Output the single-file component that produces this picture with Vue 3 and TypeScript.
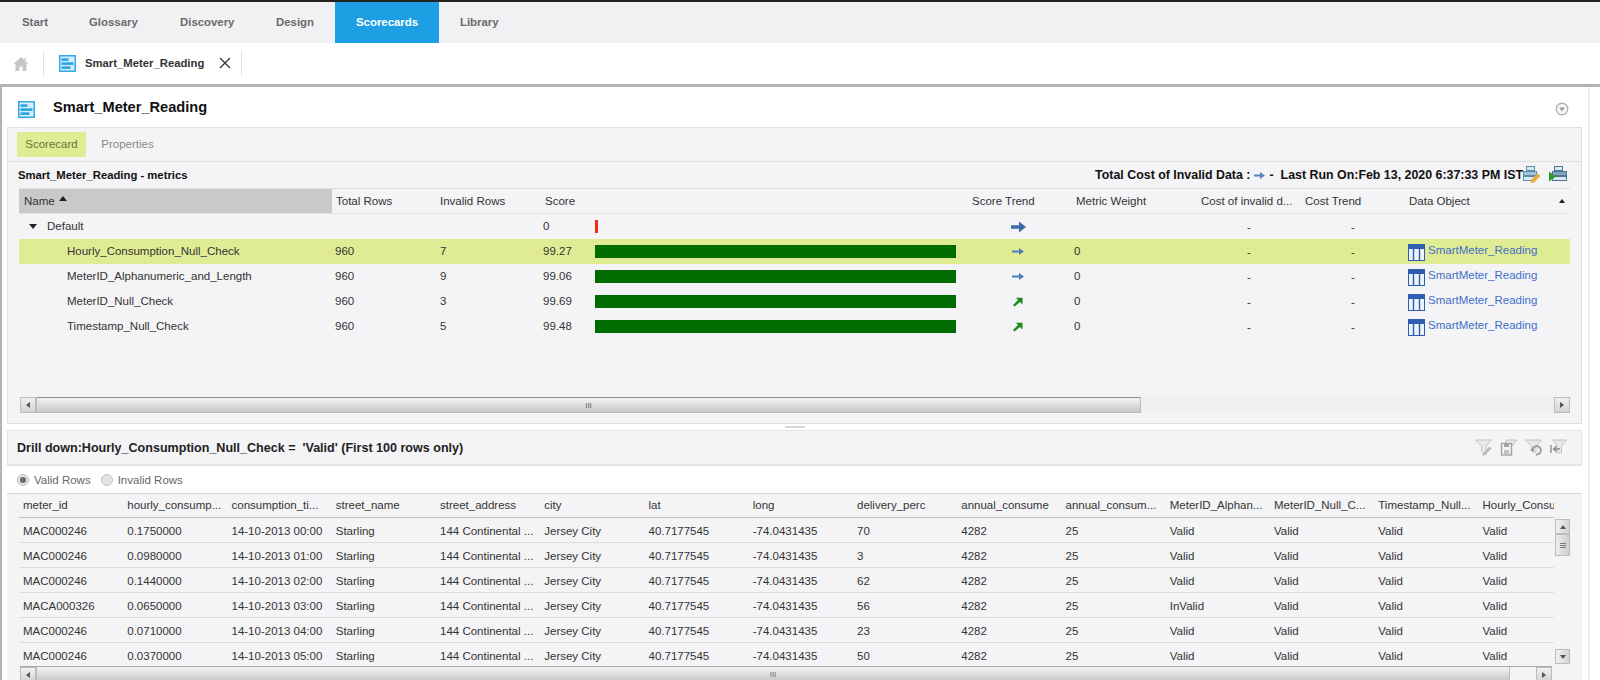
<script setup lang="ts">
interface Metric { name: string; invalid: number; score: string; trend: 'flat' | 'up'; active?: boolean }
const metrics: Metric[] = [
  { name: 'Hourly_Consumption_Null_Check', invalid: 7, score: '99.27', trend: 'flat', active: true },
  { name: 'MeterID_Alphanumeric_and_Length', invalid: 9, score: '99.06', trend: 'flat' },
  { name: 'MeterID_Null_Check', invalid: 3, score: '99.69', trend: 'up' },
  { name: 'Timestamp_Null_Check', invalid: 5, score: '99.48', trend: 'up' },
]
const navTabs = ['Start', 'Glossary', 'Discovery', 'Design', 'Scorecards', 'Library']
const heads = ['meter_id', 'hourly_consump...', 'consumption_ti...', 'street_name', 'street_address', 'city', 'lat', 'long', 'delivery_perc', 'annual_consume', 'annual_consum...', 'MeterID_Alphan...', 'MeterID_Null_C...', 'Timestamp_Null...', 'Hourly_Consu']
const rows: [string, string, string, string, string][] = [
  ['MAC000246', '0.1750000', '00:00', '70', 'Valid'],
  ['MAC000246', '0.0980000', '01:00', '3', 'Valid'],
  ['MAC000246', '0.1440000', '02:00', '62', 'Valid'],
  ['MACA000326', '0.0650000', '03:00', '56', 'InValid'],
  ['MAC000246', '0.0710000', '04:00', '23', 'Valid'],
  ['MAC000246', '0.0370000', '05:00', '50', 'Valid'],
]
</script>

<template>
  <div class="page">
    <nav class="nav">
      <a v-for="t in navTabs" :key="t" class="nav-tab" :class="['t-' + t.toLowerCase(), { on: t === 'Scorecards' }]">{{ t }}</a>
    </nav>
    <div class="tabbar">
      <svg class="home" width="16" height="16" viewBox="0 0 16 16"><path d="M8 1 L15.5 8 H13.5 V15 H9.6 V10.5 H6.4 V15 H2.5 V8 H.5 Z M11.5 2 H13 V5 L11.5 4 Z" fill="#c6c6c6" /></svg>
      <span class="vsep sep1"></span>
      <svg class="sc-icon" width="17" height="17" viewBox="0 0 17 17"><rect width="17" height="17" fill="#35a9e8" /><rect x="1.5" y="1.5" width="14" height="14" fill="#d6edfb" /><rect x="2.5" y="3.3" width="7" height="2.6" fill="#2aa4e6" /><rect x="2.5" y="7.3" width="12" height="2.6" fill="#2aa4e6" /><rect x="2.5" y="11.3" width="9" height="2.6" fill="#2aa4e6" /></svg>
      <span class="doc-name">Smart_Meter_Reading</span>
      <svg class="close" width="12" height="12" viewBox="0 0 12 12"><path d="M1 1 L11 11 M11 1 L1 11" stroke="#333" stroke-width="1.3" /></svg>
      <span class="vsep sep2"></span>
    </div>

    <main class="main">
      <header class="title-row">
        <svg class="sc-icon" width="17" height="17" viewBox="0 0 17 17"><rect width="17" height="17" fill="#35a9e8" /><rect x="1.5" y="1.5" width="14" height="14" fill="#d6edfb" /><rect x="2.5" y="3.3" width="7" height="2.6" fill="#2aa4e6" /><rect x="2.5" y="7.3" width="12" height="2.6" fill="#2aa4e6" /><rect x="2.5" y="11.3" width="9" height="2.6" fill="#2aa4e6" /></svg>
        <h1>Smart_Meter_Reading</h1>
        <svg class="collapse" width="14" height="14" viewBox="0 0 14 14"><circle cx="7" cy="7" r="5.8" fill="#f5f5f5" stroke="#a9a9a9" stroke-width="1.2" /><path d="M4.2 5.4 H9.8 L7 9.2 Z" fill="#999" /></svg>
      </header>

      <section class="score-panel">
        <div class="subtabs">
          <span class="subtab on">Scorecard</span>
          <span class="subtab">Properties</span>
        </div>
        <div class="metrics-bar">
          <strong class="mb-left">Smart_Meter_Reading - metrics</strong>
          <div class="mb-right">
            <strong>Total Cost of Invalid Data :</strong>
            <svg class="mb-arrow" width="11" height="9" viewBox="0 0 11 9"><path d="M0 3.5 H6 V1 L11 4.5 L6 8 V5.5 H0 Z" fill="#5a82bd" /></svg>
            <strong class="mb-dash">-</strong>
            <strong>Last Run On:Feb 13, 2020 6:37:33 PM IST</strong>
            <svg class="mb-ic" width="18" height="17" viewBox="0 0 18 17"><rect x="3.5" y=".5" width="8" height="4" fill="#dce8f0" stroke="#5f8bab" /><rect x=".5" y="5.5" width="13" height="4" fill="#a5c2d6" stroke="#5f8bab" /><rect x=".5" y="10.5" width="11" height="4" fill="#dce8f0" stroke="#5f8bab" /><path d="M8 14 L14.5 7.5 L17.5 10 L11 16.5 L7.5 17 Z" fill="#e6ad42" /></svg>
            <svg class="mb-ic ic2" width="18" height="17" viewBox="0 0 18 17"><rect x="5.5" y=".5" width="8" height="4" fill="#dce8f0" stroke="#4c7697" /><rect x="3.5" y="5.5" width="14" height="4" fill="#7ea4bf" stroke="#4c7697" /><rect x="3.5" y="10.5" width="14" height="4" fill="#dce8f0" stroke="#4c7697" /><path d="M0 5.5 L7 10.5 L0 15.5 Z" fill="#2f9a2c" /></svg>
          </div>
        </div>

        <div class="mgrid mhead">
          <div class="mh-name">Name <svg width="8" height="5" viewBox="0 0 8 5"><path d="M0 5 L4 0 L8 5 Z" fill="#222" /></svg></div>
          <div>Total Rows</div><div>Invalid Rows</div><div>Score</div><div></div>
          <div>Score Trend</div><div>Metric Weight</div><div>Cost of invalid d...</div><div>Cost Trend</div><div>Data Object</div>
          <div class="mh-sort"><svg width="6" height="4" viewBox="0 0 6 4"><path d="M0 4 L3 0 L6 4 Z" fill="#222" /></svg></div>
        </div>
        <div class="mgrid mrow">
          <div class="group"><svg width="8" height="5" viewBox="0 0 8 5"><path d="M0 0 H8 L4 5 Z" fill="#222" /></svg>Default</div>
          <div></div><div></div><div class="sc">0</div>
          <div class="barcell"><span class="bar red"></span></div>
          <div class="tr"><svg width="15" height="12" viewBox="0 0 15 12"><path d="M0 4.3 H8 V0.5 L15 6 L8 11.5 V7.7 H0 Z" fill="#3a6bab" /></svg></div>
          <div></div><div class="dash">-</div><div class="dash">-</div><div></div><div></div>
        </div>
        <div v-for="m in metrics" :key="m.name" class="mgrid mrow" :class="{ active: m.active }">
          <div class="mname">{{ m.name }}</div>
          <div class="tot">960</div><div>{{ m.invalid }}</div><div class="sc">{{ m.score }}</div>
          <div class="barcell"><span class="bar"></span></div>
          <div class="tr">
            <svg v-if="m.trend === 'flat'" width="12" height="9" viewBox="0 0 12 9"><path d="M0 3.6 H7 V1 L12 4.5 L7 8 V5.4 H0 Z" fill="#4f7dba" /></svg>
            <svg v-else width="10" height="10" viewBox="0 0 10 10"><path d="M1.5 9.5 L0 8 L5 3 L2.8 .8 H9.5 V7.5 L7 5 Z" fill="#1c8a1c" /></svg>
          </div>
          <div class="wt">0</div><div class="dash">-</div><div class="dash">-</div>
          <div class="dobj">
            <svg width="17" height="17" viewBox="0 0 17 17"><rect x=".5" y=".5" width="16" height="16" fill="#eef3fb" stroke="#2f5db0" /><rect x="0" y="0" width="17" height="5" fill="#2f5db0" /><path d="M5.5 5 V16 M11.5 5 V16" stroke="#2f5db0" stroke-width="1.4" /></svg>
            <a>SmartMeter_Reading</a>
          </div>
          <div></div>
        </div>
        <div class="mspacer"></div>
        <div class="hscroll hs1">
          <span class="sbtn"><i class="tri-l"></i></span>
          <span class="thumb"><em>III</em></span>
          <span class="track"></span>
          <span class="sbtn"><i class="tri-r"></i></span>
        </div>
      </section>

      <div class="splitter"><span></span></div>

      <section class="drill">
        <strong>Drill down:Hourly_Consumption_Null_Check =&nbsp; 'Valid' (First 100 rows only)</strong>
        <div class="drill-icons">
          <svg width="17" height="17" viewBox="0 0 17 17"><path d="M.5 1 H16.5 L11 7 V16 L6.5 12 V7 Z" fill="#e9e9eb" stroke="#c2c2c5" /><path d="M7.5 15 L14.5 7.5 L16.5 9.5 L9.5 16.5 L7 16.5 Z" fill="#bcbcbf" /></svg>
          <svg width="17" height="17" viewBox="0 0 17 17"><path d="M6 1 H16.5 L12 7 H6 Z" fill="#e9e9eb" stroke="#c2c2c5" /><rect x="1.5" y="4.5" width="10" height="11.5" fill="#f2f2f3" stroke="#a4a4a7" stroke-width="1.4" /><rect x="4" y="5" width="5" height="3" fill="#a4a4a7" /><rect x="4" y="11" width="5" height="4" fill="#c4c4c7" /></svg>
          <svg width="17" height="17" viewBox="0 0 17 17"><path d="M.5 1 H16.5 L11 7 V14 L6.5 11 V7 Z" fill="#e9e9eb" stroke="#c2c2c5" /><path d="M7.5 11.5 A4.2 4.2 0 1 1 11 15.5" fill="none" stroke="#96969a" stroke-width="1.7" /><path d="M5.2 10 L9.5 10 L7.5 13.5 Z" fill="#96969a" /></svg>
          <svg width="17" height="17" viewBox="0 0 17 17"><path d="M3 1 H16.5 L11.5 7 V14 H7 V7 Z" fill="#e9e9eb" stroke="#c2c2c5" /><path d="M1 6 V14 M10 10 H3.5 M6.5 7.2 L3.5 10 L6.5 12.8" fill="none" stroke="#8b8b8f" stroke-width="1.4" /></svg>
        </div>
      </section>

      <div class="radios">
        <label class="radio"><i class="dot sel"></i>Valid Rows</label>
        <label class="radio"><i class="dot"></i>Invalid Rows</label>
      </div>

      <section class="drows">
        <div class="dtable">
          <div class="dcols">
            <div class="dgrid dhead"><div v-for="h in heads" :key="h">{{ h }}</div></div>
            <div v-for="(r, i) in rows" :key="i" class="dgrid drow">
              <div>{{ r[0] }}</div><div>{{ r[1] }}</div><div>14-10-2013 {{ r[2] }}</div><div>Starling</div>
              <div>144 Continental ...</div><div>Jersey City</div><div>40.7177545</div><div>-74.0431435</div>
              <div>{{ r[3] }}</div><div>4282</div><div>25</div><div>{{ r[4] }}</div><div>Valid</div><div>Valid</div><div>Valid</div>
            </div>
          </div>
          <div class="vscroll">
            <span class="vbtn"><i class="tri-u"></i></span>
            <span class="vthumb"><em></em><em></em><em></em></span>
            <span class="vtrack"></span>
            <span class="vbtn"><i class="tri-d"></i></span>
          </div>
        </div>
        <div class="hscroll hs2">
          <span class="sbtn"><i class="tri-l"></i></span>
          <span class="thumb"><em>III</em></span>
          <span class="track"></span>
          <span class="sbtn"><i class="tri-r"></i></span>
        </div>
      </section>
    </main>
  </div>
</template>

<style>
html, body { margin: 0; background: #fff; }
</style>

<style scoped>
.page { width: 1600px; height: 680px; overflow: hidden; background: #fff; font-family: "Liberation Sans", Arial, sans-serif; font-size: 11.5px; color: #333; display: flex; flex-direction: column; }
.nav { height: 41px; flex: none; border-top: 2px solid #222; background: #f1f0f3; display: flex; font-weight: 700; font-size: 11.4px; color: #6b6b6b; }
.nav-tab { height: 41px; line-height: 41px; box-sizing: border-box; }
.t-start { padding-left: 22px; width: 89px; }
.t-glossary { width: 91px; }
.t-discovery { width: 96px; }
.t-design { width: 59px; }
.t-scorecards { width: 104px; padding-left: 21px; margin-right: 21px; }
.nav-tab.on { background: #1f9fe3; color: #fff; }
.tabbar { height: 44px; flex: none; box-sizing: border-box; border-bottom: 3px solid #b3b3b3; background: #fff; display: flex; align-items: center; }
.home { margin-left: 13px; }
.vsep { width: 1px; height: 25px; background: #e2e2e2; }
.sep1 { margin-left: 14px; }
.tabbar .sc-icon { margin-left: 15px; }
.doc-name { margin-left: 9px; margin-bottom: 2px; font-weight: 700; font-size: 11.3px; color: #333; width: 134px; }
.close { margin-bottom: 1px; }
.sep2 { margin-left: 10px; }
.main { flex: 1; min-height: 0; border-left: 2px solid #b3b3b3; border-right: 2px solid #eeeef0; padding: 0 6px 0 5px; width: 1575px; display: flex; flex-direction: column; }
.title-row { height: 40px; flex: none; display: flex; align-items: center; padding-left: 11px; }
.title-row .sc-icon { margin-top: 4px; }
.title-row h1 { margin: 0 0 0 18px; font-size: 14.6px; font-weight: 700; color: #111; }
.collapse { margin-left: auto; margin-right: 13px; margin-top: 4px; }
.score-panel { height: 297px; flex: none; background: #f4f3f6; border: 1px solid #e0e0e2; box-sizing: border-box; display: flex; flex-direction: column; }
.subtabs { height: 34px; flex: none; border-bottom: 1px solid #dedee0; display: flex; align-items: center; padding-left: 9px; box-sizing: border-box; }
.subtab { height: 25px; line-height: 25px; width: 69px; text-align: center; color: #8a8a8a; margin-right: 7px; }
.subtab.on { background: #e0ec93; color: #6d7340; }
.metrics-bar { height: 26px; flex: none; display: flex; align-items: center; padding-left: 10px; color: #111; font-size: 11.3px; }
.mb-right { margin-left: auto; display: flex; align-items: center; margin-right: 14px; font-size: 12.4px; }
.mb-arrow { margin: 0 4px; }
.mb-dash { margin-right: 7px; }
.mb-ic { margin-left: 0; margin-top: -2px; }
.ic2 { margin-left: 8px; }
.mgrid { display: grid; grid-template-columns: 313px 104px 105px 50px 377px 104px 125px 104px 104px 149px 16px; margin-left: 11px; width: 1551px; }
.mhead { height: 26px; align-items: center; border-top: 1px solid #dedee0; border-bottom: 1px solid #e2e2e4; box-sizing: border-box; }
.mhead > div { padding-left: 4px; color: #333; white-space: nowrap; box-sizing: border-box; }
.mhead .mh-name { background: #c9c8cb; height: 100%; display: flex; align-items: center; gap: 4px; padding-left: 5px; }
.mh-name svg { margin-bottom: 5px; }
.mhead > .mh-sort { display: flex; padding-left: 5px; }
.mrow { height: 25px; align-items: center; }
.mrow > div { padding-left: 4px; padding-bottom: 2px; box-sizing: border-box; white-space: nowrap; }
.mrow.active { background: #e0ec93; }
.mrow > .group { padding-left: 10px; display: flex; align-items: center; gap: 10px; }
.group svg { margin-top: 2px; }
.mrow > .mname { padding-left: 48px; }
.mrow > .tot { padding-left: 3px; }
.mrow > .sc { padding-left: 2px; }
.mrow > .barcell { padding-bottom: 0; }
.bar { display: block; width: 361px; height: 13px; background: #006c00; }
.bar.red { width: 3px; background: #f02c1c; }
.mrow > .tr { display: flex; align-items: center; justify-content: center; width: 100px; padding: 0; }
.mrow > .wt { padding-left: 2px; }
.mrow > .dash { text-align: center; padding: 0; }
.mrow > .dobj { display: flex; align-items: flex-start; gap: 3px; padding: 0 0 0 3px; position: relative; top: 1px; }
.dobj a { color: #3f6fc9; }
.mspacer { flex: 1; }
.hscroll { display: flex; align-items: stretch; flex: none; }
.hs1 { height: 16px; margin: 0 11px 10px 12px; background: #efeef1; }
.sbtn { width: 16px; flex: none; background: linear-gradient(#f1f1f3, #d3d3d6); border: 1px solid #bcbcbf; box-sizing: border-box; display: flex; align-items: center; justify-content: center; }
.thumb { display: flex; align-items: center; justify-content: center; flex: none; background: linear-gradient(#f2f2f3, #e2e2e4 40%, #c7c7ca); border: 1px solid #bbbbbe; border-top-color: #8e8e90; box-sizing: border-box; }
.thumb em { font: normal 8px "Liberation Sans", sans-serif; color: #666; }
.hs1 .thumb { width: 1105px; }
.track { flex: 1; }
.tri-l { border: 3px solid transparent; border-right: 4px solid #555; border-left: 0; }
.tri-r { border: 3px solid transparent; border-left: 4px solid #555; border-right: 0; }
.tri-u { border: 3px solid transparent; border-bottom: 4px solid #555; border-top: 0; }
.tri-d { border: 3px solid transparent; border-top: 4px solid #555; border-bottom: 0; }
.splitter { height: 6px; flex: none; display: flex; align-items: center; justify-content: center; }
.splitter span { width: 20px; height: 2px; background: #d8d8da; }
.drill { height: 36px; flex: none; background: #f4f3f6; border: 1px solid #e4e4e6; border-bottom-width: 2px; box-sizing: border-box; display: flex; align-items: center; padding-left: 9px; color: #222; font-size: 12.55px; }
.drill-icons { margin-left: auto; display: flex; gap: 8px; margin-right: 14px; }
.radios { height: 27px; flex: none; display: flex; align-items: center; padding-left: 10px; gap: 10px; color: #666; }
.radio { display: flex; align-items: center; gap: 5px; }
.dot { width: 12px; height: 12px; border-radius: 50%; background: #e4e4e6; border: 1px solid #bdbdbf; box-sizing: border-box; display: flex; align-items: center; justify-content: center; }
.dot.sel::after { content: ""; width: 6px; height: 6px; border-radius: 50%; background: #6a6a6c; }
.drows { flex: 1; min-height: 0; background: #f4f3f6; display: flex; flex-direction: column; border-top: 1px solid #d8d8da; }
.dtable { display: flex; flex: none; height: 172px; padding-left: 12px; box-sizing: border-box; }
.dcols { width: 1535px; overflow: hidden; flex: none; }
.dgrid { display: grid; grid-template-columns: repeat(15, 104.25px); height: 25px; align-items: center; border-bottom: 1px solid #dcdcde; box-sizing: border-box; white-space: nowrap; }
.dgrid > div { padding-left: 4px; overflow: hidden; }
.drow > div { padding-top: 2px; }
.dhead { height: 24px; border-bottom-color: #c3c3c5; }
.dhead > div { padding-bottom: 1px; }
.drow:last-child { border-bottom: none; height: 23px; }
.vscroll { width: 15px; flex: none; display: flex; flex-direction: column; margin-top: 25px; margin-left: 1px; margin-bottom: 2px; }
.vbtn { height: 15px; flex: none; background: linear-gradient(90deg, #f1f1f3, #d3d3d6); border: 1px solid #bcbcbf; box-sizing: border-box; display: flex; align-items: center; justify-content: center; }
.vthumb { height: 22px; flex: none; background: linear-gradient(90deg, #ededef, #cfcfd2); border: 1px solid #bcbcbf; box-sizing: border-box; display: flex; flex-direction: column; align-items: center; justify-content: center; gap: 1px; }
.vthumb em { width: 6px; height: 1px; background: #777; }
.vtrack { flex: 1; }
.hs2 { height: 16px; margin-left: 13px; width: 1532px; border-top: 1px solid #a9a9ab; box-sizing: border-box; }
.hs2 .thumb { width: 1474px; border-top: none; }
</style>
